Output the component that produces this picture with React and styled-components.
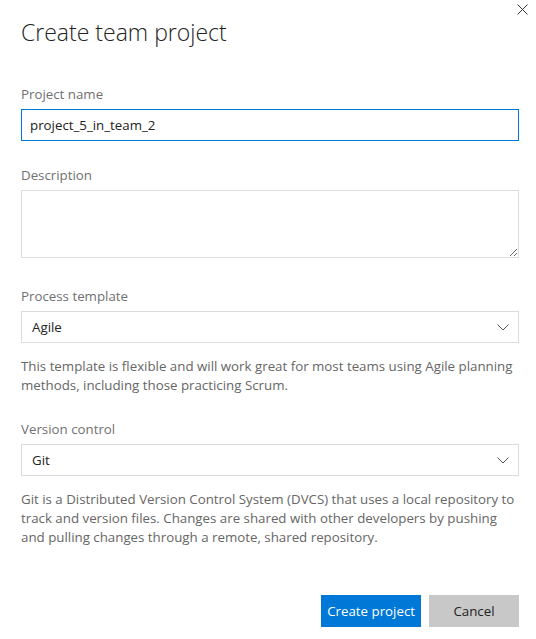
import React, { useEffect, useRef } from "react";
import styled, { createGlobalStyle } from "styled-components";

const GlobalStyle = createGlobalStyle`
  html, body { margin: 0; padding: 0; background: #ffffff; }
  body {
    font-family: "Open Sans", "Noto Sans", "Liberation Sans", sans-serif;
    font-size: 13.3px;
    color: #333333;
  }
  * { box-sizing: border-box; }
`;

const Dialog = styled.div`
  position: relative;
  width: 536px;
  min-height: 639px;
  padding: 15px 17px 0 21px;
  background: #ffffff;
`;

const CloseButton = styled.button`
  position: absolute;
  top: 4px;
  right: 8px;
  width: 11px;
  height: 11px;
  padding: 0;
  border: 0;
  background: transparent;
  display: flex;
  cursor: pointer;
`;

const Title = styled.h1`
  margin: 0 0 35px;
  font-family: "Open Sans", "Noto Sans", sans-serif;
  font-weight: 300;
  font-size: 23px;
  line-height: 34px;
  color: #222222;
`;

const Form = styled.div`
  display: flex;
  flex-direction: column;
  gap: 24px;
`;

const Field = styled.div`
  display: flex;
  flex-direction: column;
`;

const Label = styled.label`
  display: block;
  margin-bottom: 5px;
  line-height: 20px;
  font-size: 13.3px;
  color: #707070;
`;

const TextInput = styled.input`
  display: block;
  width: 100%;
  height: 32px;
  margin: 0;
  padding: 0 8px;
  border: 1px solid #0078d7;
  outline: none;
  font-family: inherit;
  font-size: 13.3px;
  color: #222222;
  caret-color: #000000;
  background: #ffffff;
`;

const TextArea = styled.textarea`
  display: block;
  width: 100%;
  height: 68px;
  margin: 0 0 4px;
  padding: 6px 8px;
  border: 1px solid #dcdcdc;
  outline: none;
  resize: vertical;
  font-family: inherit;
  font-size: 13.3px;
  color: #222222;
  background: #ffffff;
`;

const Dropdown = styled.div`
  display: flex;
  align-items: center;
  justify-content: space-between;
  height: 32px;
  padding: 0 9px 0 10px;
  border: 1px solid #dcdcdc;
  background: #ffffff;
  cursor: pointer;
`;

const DropdownValue = styled.span`
  font-size: 13.3px;
  color: #222222;
`;

const Help = styled.p`
  margin: 14px 0 0;
  font-size: 13.3px;
  line-height: 19px;
  color: #666666;
`;

const Footer = styled.div`
  display: flex;
  justify-content: flex-end;
  gap: 8px;
  margin-top: 48px;
`;

const Button = styled.button`
  height: 32px;
  min-width: ${(p) => (p.$primary ? "auto" : "90px")};
  padding: 0 6px;
  border: 0;
  font-family: inherit;
  font-size: 13.3px;
  color: ${(p) => (p.$primary ? "#ffffff" : "#212121")};
  background: ${(p) => (p.$primary ? "#0078d7" : "#c8c8c8")};
  cursor: pointer;
`;

const CloseIcon = () => (
  <svg width="11" height="11" viewBox="0 0 11 11" fill="none">
    <path d="M0.5 0.5 L10.5 10.5 M10.5 0.5 L0.5 10.5" stroke="#333333" strokeWidth="1" />
  </svg>
);

const Chevron = () => (
  <svg width="12" height="7" viewBox="0 0 12 7" fill="none">
    <path d="M0.5 0.5 L6 6 L11.5 0.5" stroke="#555555" strokeWidth="1" />
  </svg>
);

const SelectField = ({ label, value }) => (
  <Dropdown role="combobox" aria-label={label}>
    <DropdownValue>{value}</DropdownValue>
    <Chevron />
  </Dropdown>
);

export default function App() {
  const inputRef = useRef(null);
  useEffect(() => {
    const el = inputRef.current;
    if (el) {
      el.focus();
      const n = el.value.length;
      el.setSelectionRange(n, n);
    }
  }, []);

  return (
    <>
      <GlobalStyle />
      <Dialog>
        <CloseButton aria-label="Close">
          <CloseIcon />
        </CloseButton>
        <Title>Create team project</Title>
        <Form>
          <Field>
            <Label>Project name</Label>
            <TextInput ref={inputRef} defaultValue="project_5_in_team_2" />
          </Field>
          <Field>
            <Label>Description</Label>
            <TextArea />
          </Field>
          <Field>
            <Label>Process template</Label>
            <SelectField label="Process template" value="Agile" />
            <Help>
              This template is flexible and will work great for most teams using Agile planning
              methods, including those practicing Scrum.
            </Help>
          </Field>
          <Field>
            <Label>Version control</Label>
            <SelectField label="Version control" value="Git" />
            <Help>
              Git is a Distributed Version Control System (DVCS) that uses a local repository to
              track and version files. Changes are shared with other developers by pushing and
              pulling changes through a remote, shared repository.
            </Help>
          </Field>
        </Form>
        <Footer>
          <Button $primary>Create project</Button>
          <Button>Cancel</Button>
        </Footer>
      </Dialog>
    </>
  );
}
